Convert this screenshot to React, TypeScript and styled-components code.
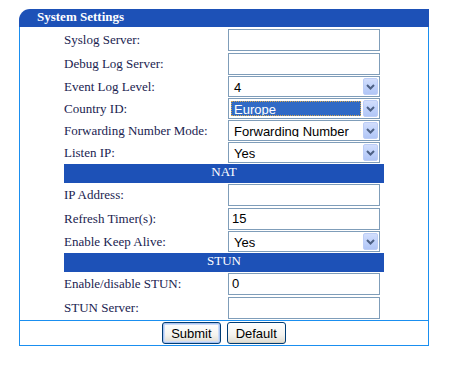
import React from 'react';
import styled, { createGlobalStyle } from 'styled-components';

const Global = createGlobalStyle`
  html, body { margin: 0; padding: 0; background: #fff; }
`;

const Page = styled.div`
  padding: 9px 0 0 19px;
`;

const Panel = styled.div`
  width: 410px;
`;

const Header = styled.div`
  height: 18px;
  line-height: 18px;
  background: #1d51b7;
  color: #fff;
  font: bold 13px "Liberation Serif", serif;
  padding-left: 18px;
  border-top-left-radius: 11px;
`;

const Body = styled.div`
  border: 1px solid #1a8ff0;
  border-top: none;
`;

const Form = styled.div`
  width: 320px;
  margin: 0 auto;
  padding-top: 1px;
  display: flex;
  flex-direction: column;
`;

const Row = styled.div<{ $h: number }>`
  display: grid;
  grid-template-columns: 164px 156px;
  height: ${(p) => p.$h}px;
  align-items: ${(p) => (p.$h === 24 ? 'center' : 'start')};
`;

const Label = styled.div`
  font: 13px "Liberation Serif", serif;
  color: #1a2350;
  align-self: center;
  white-space: nowrap;
`;

const TextBox = styled.div`
  box-sizing: border-box;
  width: 152px;
  height: 22px;
  border: 1px solid #7f9db9;
  background: #fff;
  padding-left: 3px;
  font: 13px "Liberation Sans", sans-serif;
  line-height: 20px;
  color: #000;
`;

const SelectBox = styled.div`
  box-sizing: border-box;
  width: 152px;
  height: 21px;
  border: 1px solid #7f9db9;
  background: #fff;
  display: flex;
  align-items: stretch;
  padding: 1px;
  gap: 2px;
`;

const SelectValue = styled.div<{ $selected?: boolean }>`
  flex: 1;
  box-sizing: border-box;
  padding-left: 2px;
  margin: 1px 0 1px 1px;
  font: 13px "Liberation Sans", sans-serif;
  line-height: 15px;
  color: ${(p) => (p.$selected ? '#fff' : '#000')};
  background: ${(p) => (p.$selected ? '#316ac5' : 'transparent')};
  border: 1px ${(p) => (p.$selected ? 'dotted #d9a94e' : 'solid transparent')};
  white-space: nowrap;
  overflow: hidden;
`;

const ArrowButton = styled.div`
  box-sizing: border-box;
  width: 15px;
  border: 1px solid #bccdf6;
  border-radius: 2px;
  background: linear-gradient(180deg, #d2defc 0%, #c0d2fb 50%, #b1c6f6 100%);
  display: flex;
  align-items: center;
  justify-content: center;
`;

const SectionBar = styled.div`
  height: 19px;
  line-height: 19px;
  background: #1d51b7;
  color: #fff;
  text-align: center;
  font: 13px "Liberation Serif", serif;
`;

const ButtonRow = styled.div`
  border-top: 1px solid #1a8ff0;
  padding: 1px 0;
  display: flex;
  justify-content: center;
  gap: 6px;
`;

const Button = styled.button<{ $focus?: boolean }>`
  box-sizing: border-box;
  height: 22px;
  padding: 0 8px;
  border: 1px solid #003c74;
  border-radius: 3px;
  background: linear-gradient(180deg, #ffffff 0%, #f4f3ee 60%, #dedbd0 100%);
  font: 13px "Liberation Sans", sans-serif;
  color: #000;
  box-shadow: ${(p) =>
    p.$focus ? 'inset 0 0 0 1px #a8c3f0, inset 0 0 0 2px #cfdcf7' : 'inset 0 -1px 0 #d6d0c0'};
  cursor: pointer;
`;

const Chevron = () => (
  <svg width="9" height="6" viewBox="0 0 9 6">
    <polyline points="1,1 4.5,4.5 8,1" fill="none" stroke="#4d6185" strokeWidth="2" />
  </svg>
);

const Select = ({ value, selected }: { value: string; selected?: boolean }) => (
  <SelectBox>
    <SelectValue $selected={selected}>{value}</SelectValue>
    <ArrowButton>
      <Chevron />
    </ArrowButton>
  </SelectBox>
);

type Field =
  | { kind: 'text'; label: string; value: string }
  | { kind: 'select'; label: string; value: string; selected?: boolean }
  | { kind: 'section'; label: string };

const fields: Field[] = [
  { kind: 'text', label: 'Syslog Server:', value: '' },
  { kind: 'text', label: 'Debug Log Server:', value: '' },
  { kind: 'select', label: 'Event Log Level:', value: '4' },
  { kind: 'select', label: 'Country ID:', value: 'Europe', selected: true },
  { kind: 'select', label: 'Forwarding Number Mode:', value: 'Forwarding Number' },
  { kind: 'select', label: 'Listen IP:', value: 'Yes' },
  { kind: 'section', label: 'NAT' },
  { kind: 'text', label: 'IP Address:', value: '' },
  { kind: 'text', label: 'Refresh Timer(s):', value: '15' },
  { kind: 'select', label: 'Enable Keep Alive:', value: 'Yes' },
  { kind: 'section', label: 'STUN' },
  { kind: 'text', label: 'Enable/disable STUN:', value: '0' },
  { kind: 'text', label: 'STUN Server:', value: '' },
];

export default function App() {
  return (
    <Page>
      <Global />
      <Panel>
        <Header>System Settings</Header>
        <Body>
          <Form>
            {fields.map((f, i) => {
              if (f.kind === 'section') return <SectionBar key={i}>{f.label}</SectionBar>;
              if (f.kind === 'text')
                return (
                  <Row key={i} $h={24}>
                    <Label>{f.label}</Label>
                    <TextBox>{f.value}</TextBox>
                  </Row>
                );
              return (
                <Row key={i} $h={22}>
                  <Label>{f.label}</Label>
                  <Select value={f.value} selected={f.selected} />
                </Row>
              );
            })}
          </Form>
          <ButtonRow>
            <Button $focus>Submit</Button>
            <Button>Default</Button>
          </ButtonRow>
        </Body>
      </Panel>
    </Page>
  );
}
